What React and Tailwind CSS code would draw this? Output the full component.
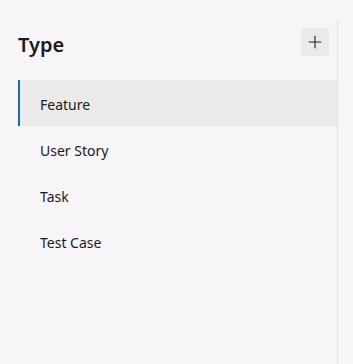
import { Plus } from "lucide-react";

const types = ["Feature", "User Story", "Task", "Test Case"];

export default function App() {
  const selected = "Feature";

  return (
    <div
      className="flex h-[364px] w-[353px] bg-[#f7f5f8] pt-5 text-[#1b1b1b]"
      style={{ fontFamily: '"Segoe UI", "Noto Sans", "Open Sans", sans-serif' }}
    >
      <div className="flex h-full w-[338px] flex-col border-r border-[#e1dfe2] pl-[18px] pt-2">
        {/* header */}
        <div className="flex h-7 items-center justify-between pr-2">
          <h2 className="pt-[5px] text-[20px] font-semibold leading-7">Type</h2>
          <button className="flex h-7 w-7 items-center justify-center rounded-[2px] bg-[#ebe9ea]">
            <Plus className="h-5 w-5 text-[#242424]" strokeWidth={1.3} />
          </button>
        </div>

        {/* list */}
        <ul className="mt-6 flex flex-col">
          {types.map((t) => (
            <li
              key={t}
              className={
                t === selected
                  ? "flex h-[46px] items-center border-l-2 border-[#0f6cbd] bg-[#ebe9ea] pl-5 pt-[3px] text-sm"
                  : "flex h-[46px] items-center border-l-2 border-transparent pl-5 pt-[3px] text-sm"
              }
            >
              {t}
            </li>
          ))}
        </ul>
      </div>
    </div>
  );
}
